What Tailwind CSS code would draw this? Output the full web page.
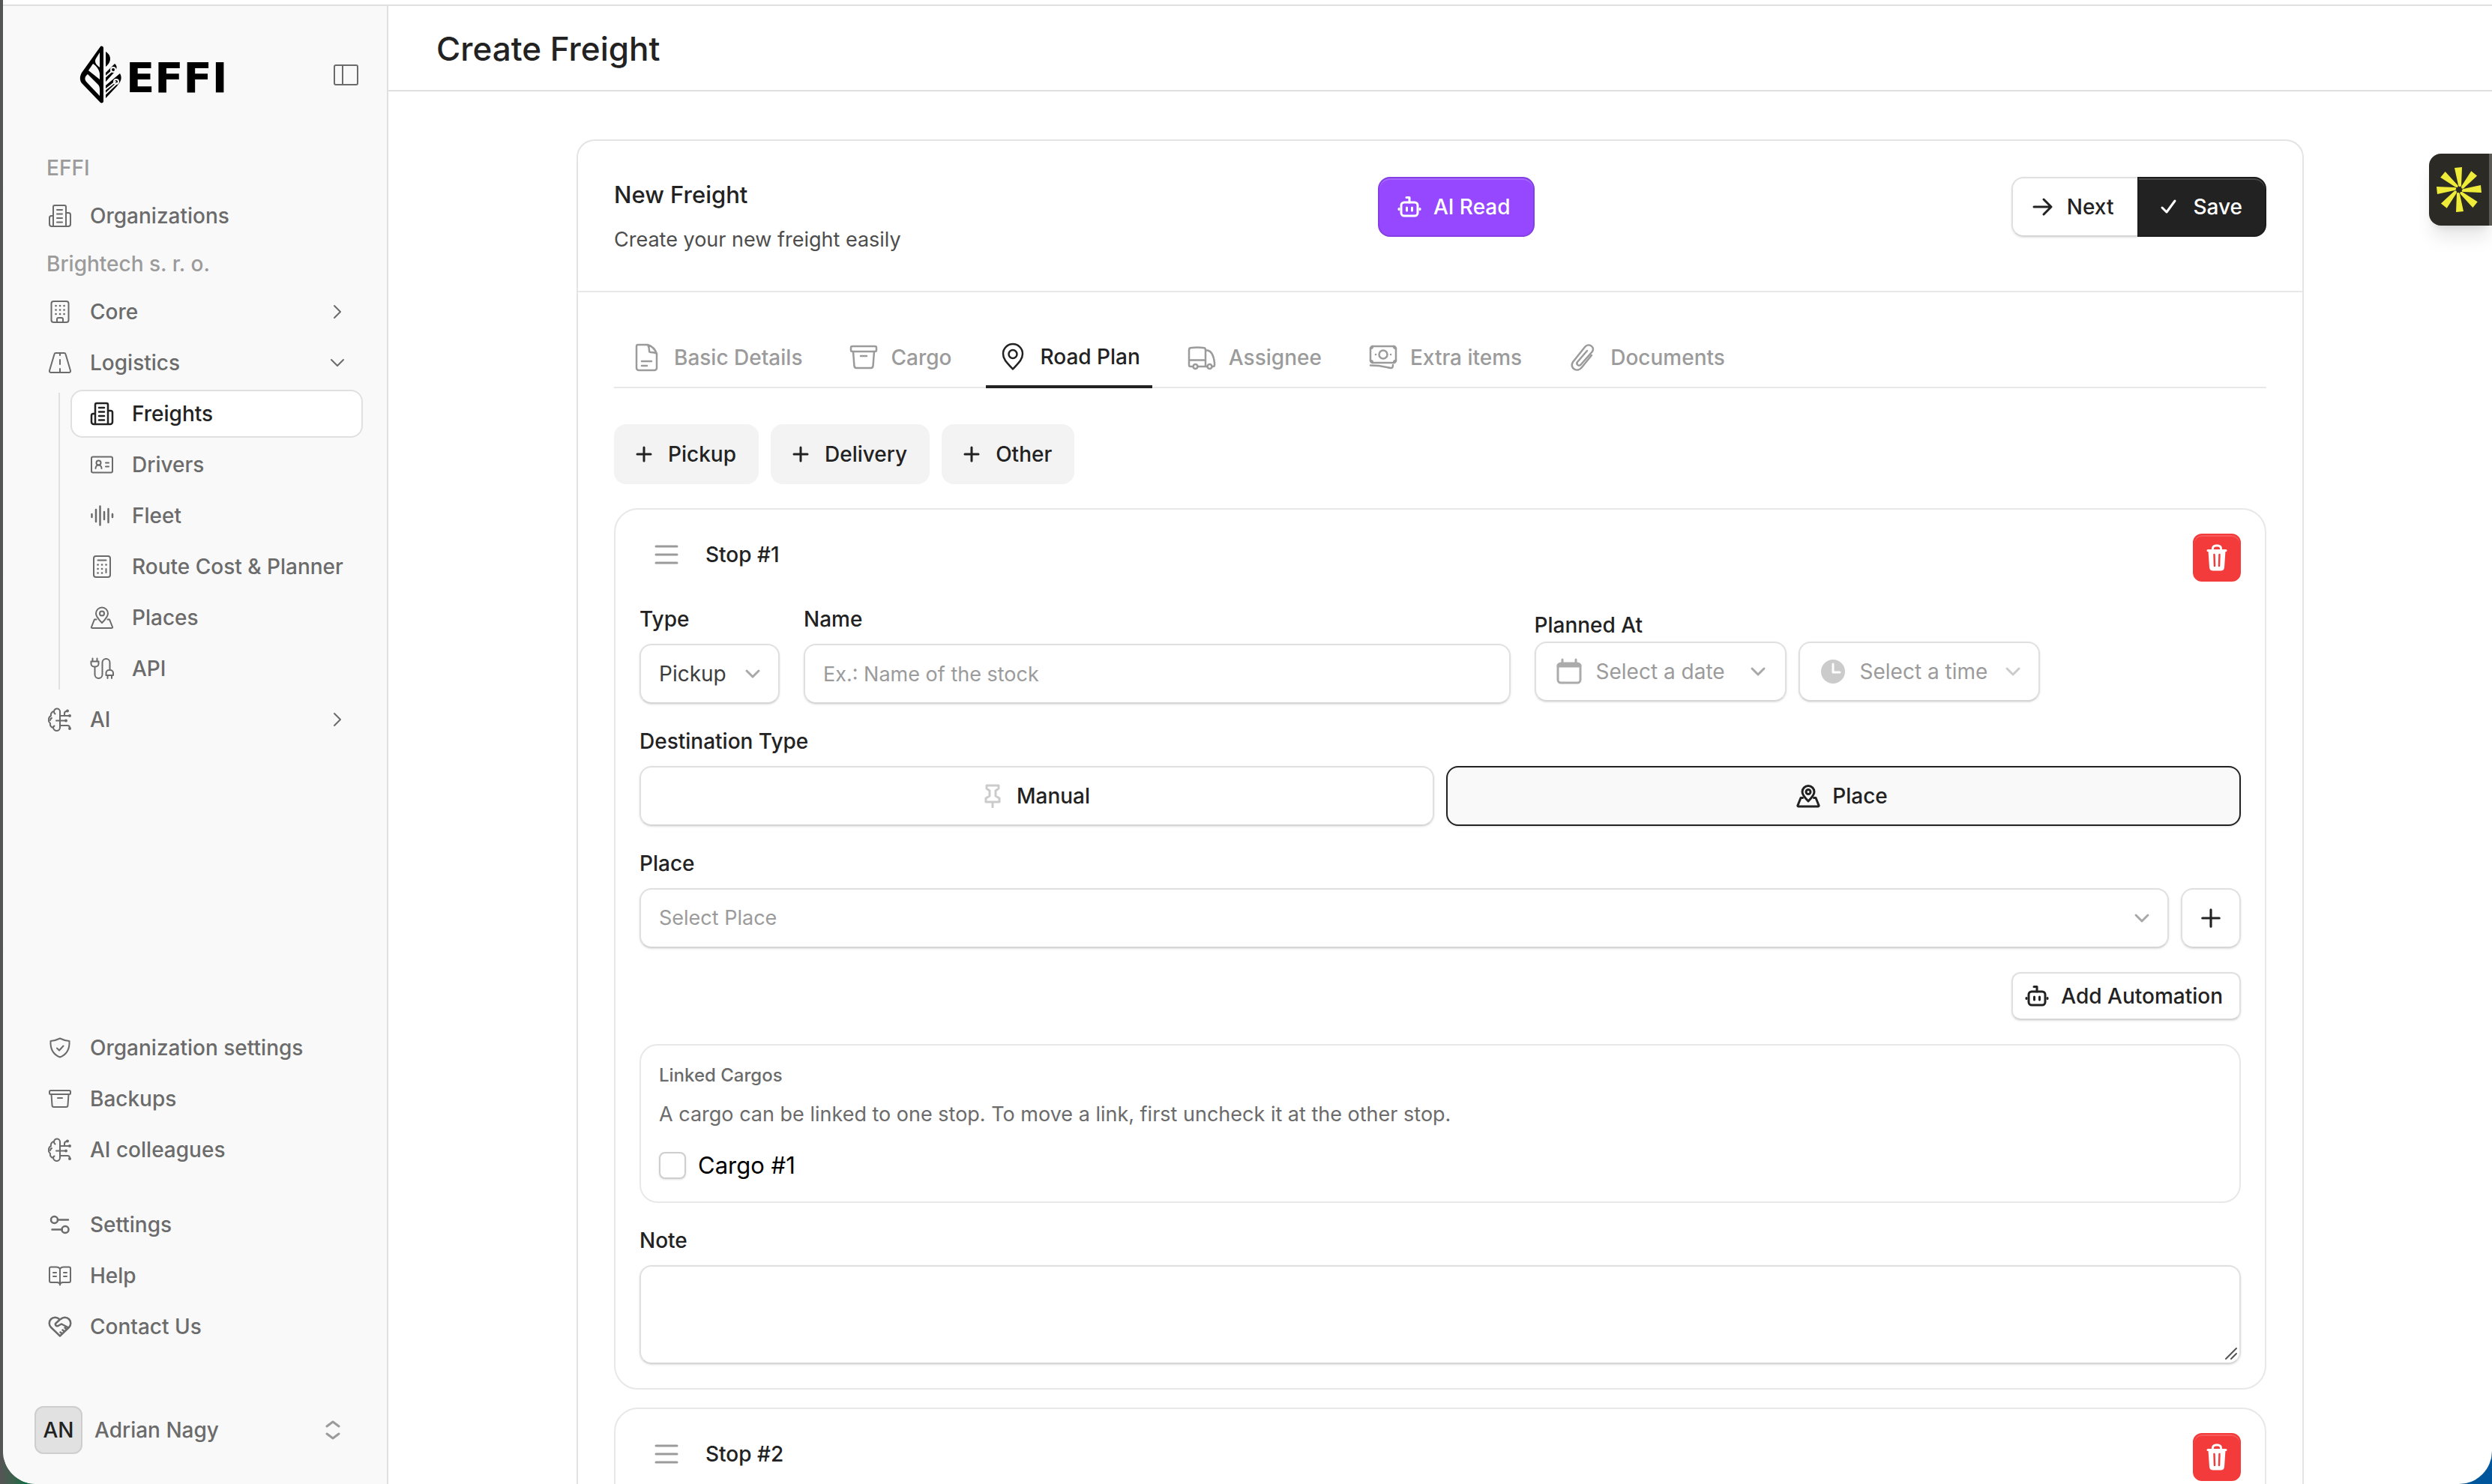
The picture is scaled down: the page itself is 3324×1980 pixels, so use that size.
<!DOCTYPE html>
<html lang="en">
<head>
    <meta charset="UTF-8">
    <meta name="viewport" content="width=device-width, initial-scale=1.0">
    <title>Create Freight - EFFI</title>
    <!-- Tailwind CSS CDN -->
    <script src="https://cdn.jsdelivr.net/npm/@tailwindcss/browser@4"></script>
    <style>
        body {
            font-family: 'Inter', sans-serif;
        }
        svg {
            stroke-linecap: round;
            stroke-linejoin: round;
        }
    </style>
</head>
<body class="bg-[#0b3b4d] text-[28px] leading-9 text-[#222222]">

    <!-- Icon sprite -->
    <svg class="hidden" aria-hidden="true">
        <symbol id="i-news" viewBox="0 0 32 32">
            <path d="M7 30V4a2 2 0 0 1 2-2h13a2 2 0 0 1 2 2v26M7 16H4.500a2.500 2.500 0 0 0-2.500 2.500V27a3 3 0 0 0 3 3h22a3 3 0 0 0 3-3V14.500a2.500 2.500 0 0 0-2.500-2.500H24M12 8h7M12 13.500h7M12 19h7M12 24.500h7"/>
        </symbol>
        <symbol id="i-building" viewBox="0 0 32 32">
            <rect x="4.500" y="2" width="23" height="28" rx="3"/><path d="M12 30v-4a2 2 0 0 1 2-2h4a2 2 0 0 1 2 2v4"/>
            <path stroke-width="2.600" d="M10.500 8h.1M16 8h.1M21.500 8h.1M10.500 13.500h.1M16 13.500h.1M21.500 13.500h.1M10.500 19h.1M16 19h.1M21.500 19h.1"/>
        </symbol>
        <symbol id="i-road" viewBox="0 0 32 32">
            <path d="M10.500 3h11a2 2 0 0 1 2 1.500l6.500 22a2 2 0 0 1-2 2.500H4a2 2 0 0 1-2-2.500l6.500-22a2 2 0 0 1 2-1.500zM16 3v3M16 12v6M16 24v4"/>
        </symbol>
        <symbol id="i-card" viewBox="0 0 32 32">
            <rect x="2" y="5.500" width="28" height="21" rx="2"/><circle cx="11.500" cy="13.500" r="3"/><path d="M7.500 21c0-6 8-6 8 0M21 13.500h4M21 18.500h4"/>
        </symbol>
        <symbol id="i-wave" viewBox="0 0 32 32">
            <path d="M2.500 14v4M8 8v16M13.500 3.500v25M19 11v10M24.500 7v18M30 14v4"/>
        </symbol>
        <symbol id="i-calc" viewBox="0 0 32 32">
            <rect x="5" y="2" width="22" height="28" rx="3"/><path d="M10.500 7.500h11M21.500 19v5"/>
            <path stroke-width="2.600" d="M10.500 13.500h.1M16 13.500h.1M21.500 13.500h.1M10.500 19h.1M16 19h.1M10.500 24.500h.1M16 24.500h.1"/>
        </symbol>
        <symbol id="i-map" viewBox="0 0 32 32">
            <path d="M16 23c-5-5-8-8.500-8-12.500a8 8 0 0 1 16 0c0 4-3 7.500-8 12.500z"/><circle cx="16" cy="10.500" r="3"/><path d="M8.500 18.500H6L2 28.500c-.5 1 .5 1.500 1 1.500h26c.5 0 1.500-.5 1-1.500l-4-10h-2.500"/>
        </symbol>
        <symbol id="i-plug" viewBox="0 0 32 32">
            <path d="M3.500 2.500v4M9.500 2.500v4M1.500 6.500h10v3a4 4 0 0 1-4 4h-2a4 4 0 0 1-4-4zM6.500 13.500V24a5 5 0 0 0 10 0V8a5 5 0 0 1 10 0v10M21.500 25v-3a4 4 0 0 1 4-4h1.500a4 4 0 0 1 4 4v3zM23.500 25v4M29 25v4"/>
        </symbol>
        <symbol id="i-brain" viewBox="0 0 32 32">
            <path d="M16 6a4 4 0 0 0-8-1 5 5 0 0 0-4 6 6 6 0 0 0-1 10 5 5 0 0 0 4 6 4.500 4.500 0 0 0 9-1zM8 5c0 2 .5 3 1.500 3.500M3 17c0-1.500 1-2.500 2-3M7 27c0-1.500.5-2 1.500-2.500M11 17.500h12M16 11h12M22 11V8c0-2 1-3 3-3M16 24h10c2 0 3 1 3 3"/>
            <circle cx="26" cy="4.500" r="1"/><circle cx="29" cy="11" r="1"/><circle cx="24" cy="17.500" r="1"/><circle cx="29" cy="28" r="1"/>
        </symbol>
        <symbol id="i-shield" viewBox="0 0 32 32">
            <path d="M16 3.500c4 2 8 3 12.500 3.500.5 9.500-2 17.500-12.500 21.500C5.500 24.500 3 16.500 3.500 7 8 6.500 12 5.500 16 3.500zM12 16.500l3 3 5.500-6"/>
        </symbol>
        <symbol id="i-archive" viewBox="0 0 32 32">
            <rect x="2" y="5" width="28" height="5" rx="1.500"/><path d="M4.500 10l1 14.500a2.500 2.500 0 0 0 2.500 2.500h16a2.500 2.500 0 0 0 2.500-2.500l1-14.500M13 15h6"/>
        </symbol>
        <symbol id="i-sliders" viewBox="0 0 32 32">
            <circle cx="8.500" cy="9.500" r="4.500"/><path d="M13 9.500H27M5.500 22.500h13"/><circle cx="23" cy="22.500" r="4.500"/>
        </symbol>
        <symbol id="i-book" viewBox="0 0 32 32">
            <path d="M16 7c-1-2-3-2.500-5-2.500H4a2 2 0 0 0-2 2V23a2 2 0 0 0 2 2h8c2 0 4 1 4 3.500 0-2.500 2-3.500 4-3.500h8a2 2 0 0 0 2-2V6.500a2 2 0 0 0-2-2h-7c-2 0-4 .5-5 2.500zM16 7v21M7 12h4M7 17h4M21 12h4M21 17h4"/>
        </symbol>
        <symbol id="i-heart" viewBox="0 0 32 32">
            <path d="M16 28.500L4 17C1 14 1 9 4 6c3-3 8-3 11 0l1 .5 1-.5c3-3 8-3 11 0s3 8 0 11zM16 6.500l-5.500 5c-1.500 1.500 0 4.500 3 3.500l4.500-2.500 9.500 5M22 22.500l-2.500-2M19 25.500l-2.500-2M25 19.500l-2.500-2"/>
        </symbol>
        <symbol id="i-chev" viewBox="0 0 32 32"><path d="M8 12l8 8 8-8"/></symbol>
        <symbol id="i-plus" viewBox="0 0 32 32"><path d="M16 7v18M7 16h18"/></symbol>
        <symbol id="i-robot" viewBox="0 0 32 32">
            <rect x="5" y="10" width="22" height="18" rx="4"/><path d="M12 3.500h4V10M2 18.500v1M30 18.500v1M12.500 17v4M19.500 17v4"/>
        </symbol>
        <symbol id="i-trash" viewBox="0 0 32 36">
            <path d="M10.500 7V6a4 4 0 0 1 4-4h3a4 4 0 0 1 4 4v1M4 8.500h24" stroke-width="3"/>
            <path fill="currentColor" stroke="none" d="M4.500 9h23L26 31a5 5 0 0 1-5 4.500H11A5 5 0 0 1 6 31z"/>
            <path class="stroke-[#f43b3b]" stroke-width="2.500" d="M12.500 14l.5 15M19.500 14l-.5 15"/>
        </symbol>
        <symbol id="i-doc" viewBox="0 0 40 40">
            <path d="M8 3h13c6 2 10 6 12 12v19a3 3 0 0 1-3 3H9a3 3 0 0 1-3-3V5a2 2 0 0 1 2-2zM21 3c2 3 2 6 2 8a2 2 0 0 0 2 2c3 0 6 0 8 2M13 25h13M13 31h7"/>
        </symbol>
        <symbol id="i-box" viewBox="0 0 40 40">
            <rect x="3" y="5" width="34" height="7" rx="2"/><path d="M6 12l1.500 19.500a3 3 0 0 0 3 2.500h19a3 3 0 0 0 3-2.500L34 12M16 18h8"/>
        </symbol>
        <symbol id="i-pin" viewBox="0 0 40 40">
            <path d="M20 36.500C11 27 7 23 7 16a13 13 0 0 1 26 0c0 7-4 11-13 20.500z"/><circle cx="20" cy="16.500" r="5.500"/>
        </symbol>
        <symbol id="i-truck" viewBox="0 0 40 40">
            <path d="M8.500 32H5a2 2 0 0 1-2-2V10c0-2 1-3 3-3 6-.7 11-.7 16 0 2 0 3 1 3 3v22M14.500 32h13M3 23.500h22M25 10.500h3c5 1 8 8 9 16.500v3a2 2 0 0 1-2 2h-1.500"/><circle cx="11.500" cy="32" r="3"/><circle cx="30.500" cy="32" r="3"/>
        </symbol>
        <symbol id="i-cash" viewBox="0 0 40 40">
            <rect x="3" y="5" width="34" height="22" rx="3"/><circle cx="20" cy="16" r="5.500"/><path d="M3 8c2 0 3-1 3-3M37 8c-2 0-3-1-3-3M3 24c2 0 3 1 3 3M37 24c-2 0-3 1-3 3M10 16h.1M30 16h.1M3 30.500c14 0 19 2 27 3.500 2 .3 3-1 3-4"/>
        </symbol>
        <symbol id="i-clip" viewBox="0 0 40 40">
            <path d="M31 17L18 33c-6 8-17 1-12-7L22 6c5-6 14 0 10 6L17 29c-3 4-7 0-5-3l13-15"/>
        </symbol>
        <symbol id="i-tack" viewBox="0 0 32 32">
            <path d="M8 2h16v4l-4 3v7l5 3v5H7v-5l5-3V9L8 6zM16 24v7"/>
        </symbol>
    </svg>

    <!-- Desktop strip behind the window -->
    <div class="h-screen overflow-hidden bg-gradient-to-r from-[#555555] via-[#0f6b45] via-1% to-[#00569c] pl-1">
        <div class="relative flex h-full flex-col overflow-hidden rounded-b-[44px] bg-white">
            <div class="h-2 shrink-0 border-b-2 border-[#e0e0e0]"></div>

            <div class="flex min-h-0 flex-1">

                <!-- Sidebar -->
                <aside class="flex w-[514px] shrink-0 flex-col border-r-2 border-[#e0e0e0] bg-[#f9f9f9] font-medium text-[#6b6b6b]">
                    <div class="flex h-[184px] shrink-0 items-center justify-between pr-9 pl-[100px]">
                        <a href="#" class="flex items-center gap-1 text-black" aria-label="EFFI home">
                            <svg class="h-20 w-[60px]" viewBox="0 0 60 80">
                                <path d="M30 2c2-1 4 0 4 2v71c0 2-2 3-4 2L6 52c-4-4-4-10-1-15z"/>
                                <path class="fill-[#f9f9f9]" d="M29 10v20c-4-3-8-7-5-12zM20 25c5 3 9 9 9 14v7L14 34zM13 39l14 14c2 2 2 5 2 8v7L12 50c-4-4-3-8 1-11z" />
                                <path d="M37 9c7 4 9 13 0 20zM37 37L49 25c5 4 2 9-2 13L37 49zM37 54l19-16c4 7 0 12-4 17L37 71z"/>
                                <path class="stroke-[#f9f9f9]" stroke-width="2" d="M36 43l9-8M36 60l14-11M36 66l16-15"/>
                                <circle cx="47" cy="33" r="3" fill="none" class="stroke-[#f9f9f9]" stroke-width="2"/>
                                <circle cx="51" cy="49" r="3" fill="none" class="stroke-[#f9f9f9]" stroke-width="2"/>
                            </svg>
                            <span class="pt-2 font-['DejaVu_Sans'] text-[56px] leading-none font-bold">EFFI</span>
                        </a>
                        <button type="button" aria-label="Toggle sidebar">
                            <svg class="size-9 fill-none stroke-current stroke-2" viewBox="0 0 36 36"><rect x="2" y="5" width="31" height="26" rx="2"/><path d="M13 5v26"/></svg>
                        </button>
                    </div>

                    <nav class="px-[42px] pr-8" aria-label="Main">
                        <h2 class="flex h-16 items-center pl-4 text-[#9b9b9b]">EFFI</h2>
                        <a href="#" class="flex h-16 items-center gap-6 pl-[18px]">
                            <svg class="size-8 fill-none stroke-current stroke-2"><use href="#i-news"/></svg>Organizations
                        </a>
                        <h2 class="flex h-16 items-center pl-4 text-[#9b9b9b]">Brightech s. r. o.</h2>
                        <div class="flex flex-col gap-1">
                            <a href="#" class="flex h-16 items-center gap-6 px-[18px]">
                                <svg class="size-8 fill-none stroke-current stroke-2"><use href="#i-building"/></svg>
                                <span class="flex-1">Core</span>
                                <svg class="size-8 -rotate-90 fill-none stroke-current stroke-2"><use href="#i-chev"/></svg>
                            </a>
                            <a href="#" class="flex h-16 items-center gap-6 px-[18px]">
                                <svg class="size-8 fill-none stroke-current stroke-2"><use href="#i-road"/></svg>
                                <span class="flex-1">Logistics</span>
                                <svg class="size-8 fill-none stroke-current stroke-2"><use href="#i-chev"/></svg>
                            </a>
                            <div class="flex">
                                <div class="my-1 ml-8 w-[2px] bg-[#e0e0e0]"></div>
                                <div class="ml-3.5 flex flex-1 flex-col gap-1">
                                    <a href="#" class="flex h-16 items-center gap-6 rounded-2xl border-2 border-[#e0e0e0] bg-white pl-6 text-[#222222]">
                                        <svg class="size-8 fill-none stroke-current stroke-[2.5px]"><use href="#i-news"/></svg>Freights
                                    </a>
                                    <a href="#" class="flex h-16 items-center gap-6 pl-[26px]">
                                        <svg class="size-8 fill-none stroke-current stroke-2"><use href="#i-card"/></svg>Drivers
                                    </a>
                                    <a href="#" class="flex h-16 items-center gap-6 pl-[26px]">
                                        <svg class="size-8 fill-none stroke-current stroke-[2.5px]"><use href="#i-wave"/></svg>Fleet
                                    </a>
                                    <a href="#" class="flex h-16 items-center gap-6 pl-[26px]">
                                        <svg class="size-8 fill-none stroke-current stroke-2"><use href="#i-calc"/></svg>Route Cost &amp; Planner
                                    </a>
                                    <a href="#" class="flex h-16 items-center gap-6 pl-[26px]">
                                        <svg class="size-8 fill-none stroke-current stroke-2"><use href="#i-map"/></svg>Places
                                    </a>
                                    <a href="#" class="flex h-16 items-center gap-6 pl-[26px]">
                                        <svg class="size-8 fill-none stroke-current stroke-2"><use href="#i-plug"/></svg>API
                                    </a>
                                </div>
                            </div>
                            <a href="#" class="flex h-16 items-center gap-6 px-[18px]">
                                <svg class="size-8 fill-none stroke-current stroke-2"><use href="#i-brain"/></svg>
                                <span class="flex-1">AI</span>
                                <svg class="size-8 -rotate-90 fill-none stroke-current stroke-2"><use href="#i-chev"/></svg>
                            </a>
                        </div>
                    </nav>

                    <nav class="mt-auto flex flex-col gap-1 px-[42px]" aria-label="Organization">
                        <a href="#" class="flex h-16 items-center gap-6 pl-[18px]">
                            <svg class="size-8 fill-none stroke-current stroke-2"><use href="#i-shield"/></svg>Organization settings
                        </a>
                        <a href="#" class="flex h-16 items-center gap-6 pl-[18px]">
                            <svg class="size-8 fill-none stroke-current stroke-2"><use href="#i-archive"/></svg>Backups
                        </a>
                        <a href="#" class="flex h-16 items-center gap-6 pl-[18px]">
                            <svg class="size-8 fill-none stroke-current stroke-2"><use href="#i-brain"/></svg>AI colleagues
                        </a>
                        <a href="#" class="mt-8 flex h-16 items-center gap-6 pl-[18px]">
                            <svg class="size-8 fill-none stroke-current stroke-[2.5px]"><use href="#i-sliders"/></svg>Settings
                        </a>
                        <a href="#" class="flex h-16 items-center gap-6 pl-[18px]">
                            <svg class="size-8 fill-none stroke-current stroke-2"><use href="#i-book"/></svg>Help
                        </a>
                        <a href="#" class="flex h-16 items-center gap-6 pl-[18px]">
                            <svg class="size-8 fill-none stroke-current stroke-[2.5px]"><use href="#i-heart"/></svg>Contact Us
                        </a>
                    </nav>

                    <!-- User -->
                    <button type="button" class="mt-[74px] mb-10 flex items-center gap-4 pr-14 pl-[42px] text-left">
                        <span class="flex size-16 items-center justify-center rounded-xl border-2 border-[#cecece] bg-[#e1e1e1] text-[#222222]">AN</span>
                        <span class="flex-1">Adrian Nagy</span>
                        <svg class="size-8 fill-none stroke-[#9b9b9b] stroke-3" viewBox="0 0 32 32"><path d="M8 11l8-6 8 6M8 21l8 6 8-6"/></svg>
                    </button>
                </aside>

                <!-- Main -->
                <main class="flex min-w-0 flex-1 flex-col">
                    <header class="flex h-[114px] shrink-0 items-center border-b-2 border-[#e0e0e0] px-16">
                        <h1 class="pt-0.5 text-[44px] leading-[52px] font-medium">Create Freight</h1>
                    </header>

                    <div class="min-h-0 flex-1 overflow-hidden px-16 pt-16">
                        <form class="mx-auto max-w-[2304px] rounded-t-3xl border-2 border-b-0 border-[#e4e4e4]">
                            <div class="flex items-start justify-between border-b-2 border-[#e8e8e8] p-12">
                                <div class="flex flex-col gap-4">
                                    <h2 class="text-[31px] leading-[48px] font-medium">New Freight</h2>
                                    <p class="text-[27px] leading-10 text-[#4d4d4d]">Create your new freight easily</p>
                                </div>
                                <button type="button" class="flex h-20 items-center gap-4 rounded-2xl border-2 border-[#833fe4] bg-[#9548ff] pr-[30px] pl-6 font-medium text-white shadow-[inset_0_2px_0_#a567ff]">
                                    <svg class="size-8 fill-none stroke-current stroke-3"><use href="#i-robot"/></svg>AI Read
                                </button>
                                <div class="flex font-medium">
                                    <button type="button" class="flex h-20 items-center gap-4 rounded-l-2xl border-2 border-r-0 border-[#e0e0e0] border-b-[#d6d6d6] pr-8 pl-6 shadow-sm">
                                        <svg class="size-8 fill-none stroke-current stroke-3" viewBox="0 0 32 32"><path d="M4 16h23M17 6l10 10-10 10"/></svg>Next
                                    </button>
                                    <button type="button" class="flex h-20 items-center gap-4 rounded-r-2xl border-2 border-[#1c1c1c] bg-[#222222] pr-[30px] pl-6 text-white shadow-[inset_0_2px_0_#484848]">
                                        <svg class="size-8 fill-none stroke-current stroke-3" viewBox="0 0 32 32"><path d="M7 17l6 6L24 8"/></svg>Save
                                    </button>
                                </div>
                            </div>

                            <div class="p-12">
                                <!-- Tabs -->
                                <div role="tablist" class="flex h-20 gap-[30px] border-b-2 border-[#e8e8e8] px-2 font-medium text-[#9b9b9b]">
                                    <button type="button" role="tab" class="flex items-center gap-4 px-4">
                                        <svg class="size-10 fill-none stroke-current stroke-[2.5px]"><use href="#i-doc"/></svg>Basic Details
                                    </button>
                                    <button type="button" role="tab" class="flex items-center gap-4 px-4">
                                        <svg class="size-10 fill-none stroke-current stroke-[2.5px]"><use href="#i-box"/></svg>Cargo
                                    </button>
                                    <button type="button" role="tab" aria-selected="true" class="-mb-0.5 flex items-center gap-4 border-b-4 border-[#222222] px-4 text-[#222222]">
                                        <svg class="size-10 fill-none stroke-current stroke-[2.5px]"><use href="#i-pin"/></svg>Road Plan
                                    </button>
                                    <button type="button" role="tab" class="flex items-center gap-4 px-4">
                                        <svg class="size-10 fill-none stroke-current stroke-[2.5px]"><use href="#i-truck"/></svg>Assignee
                                    </button>
                                    <button type="button" role="tab" class="flex items-center gap-4 px-4">
                                        <svg class="size-10 fill-none stroke-current stroke-[2.5px]"><use href="#i-cash"/></svg>Extra items
                                    </button>
                                    <button type="button" role="tab" class="flex items-center gap-4 px-4">
                                        <svg class="size-10 fill-none stroke-current stroke-[2.5px]"><use href="#i-clip"/></svg>Documents
                                    </button>
                                </div>

                                <!-- Add stop buttons -->
                                <div class="mt-12 flex gap-4 font-medium">
                                    <button type="button" class="flex h-20 items-center gap-4 rounded-2xl bg-[#f3f3f3] pr-[30px] pl-6">
                                        <svg class="size-8 fill-none stroke-current stroke-3"><use href="#i-plus"/></svg>Pickup
                                    </button>
                                    <button type="button" class="flex h-20 items-center gap-4 rounded-2xl bg-[#f3f3f3] pr-[30px] pl-6">
                                        <svg class="size-8 fill-none stroke-current stroke-3"><use href="#i-plus"/></svg>Delivery
                                    </button>
                                    <button type="button" class="flex h-20 items-center gap-4 rounded-2xl bg-[#f3f3f3] pr-[30px] pl-6">
                                        <svg class="size-8 fill-none stroke-current stroke-3"><use href="#i-plus"/></svg>Other
                                    </button>
                                </div>

                                <!-- Stop #1 -->
                                <section class="mt-8 flex flex-col gap-8 rounded-[32px] border-2 border-[#e8e8e8] p-8">
                                    <div class="flex items-start justify-between">
                                        <div class="flex h-14 items-center gap-9 pl-5 font-medium">
                                            <svg class="h-7 w-8 fill-none stroke-[#9b9b9b] stroke-3" viewBox="0 0 32 28"><path d="M2 3h28M2 14h28M2 25h28"/></svg>
                                            <h3>Stop #1</h3>
                                        </div>
                                        <button type="button" aria-label="Delete stop 1" class="flex size-16 items-center justify-center rounded-xl border-2 border-[#f43b3b] bg-[#f43b3b] text-white shadow-[inset_0_2px_0_#f65a5a]">
                                            <svg class="h-9 w-8 fill-none stroke-current"><use href="#i-trash"/></svg>
                                        </button>
                                    </div>

                                    <div class="flex gap-8">
                                        <div class="flex flex-col gap-[15px]">
                                            <label for="type" class="font-medium">Type</label>
                                            <div class="relative">
                                                <select id="type" class="h-20 w-[187px] appearance-none rounded-2xl border-2 border-[#e0e0e0] border-b-[#d6d6d6] bg-white pl-6 text-[#3d3d3d] shadow-sm">
                                                    <option>Pickup</option>
                                                    <option>Delivery</option>
                                                    <option>Other</option>
                                                </select>
                                                <svg class="pointer-events-none absolute top-6 right-5 size-8 fill-none stroke-[#a8a8a8] stroke-3"><use href="#i-chev"/></svg>
                                            </div>
                                        </div>
                                        <div class="flex min-w-0 flex-1 flex-col gap-[15px]">
                                            <label for="name" class="font-medium">Name</label>
                                            <input id="name" type="text" placeholder="Ex.: Name of the stock" class="h-20 w-full rounded-2xl border-2 border-[#e0e0e0] border-b-[#d6d6d6] px-6 text-[27px] shadow-sm placeholder:text-[#9b9b9b]">
                                        </div>
                                        <div class="flex min-w-0 flex-1 flex-col gap-1 pt-2">
                                            <label for="date" class="font-medium">Planned At</label>
                                            <div class="flex gap-4">
                                                <button id="date" type="button" class="flex h-20 w-[336px] items-center gap-4 rounded-2xl border-2 border-[#e0e0e0] border-b-[#d6d6d6] px-5 pl-6 text-left text-[#9b9b9b] shadow-sm">
                                                    <svg class="size-10 fill-none stroke-[#ababab] stroke-[3px]" viewBox="0 0 40 40"><rect x="5" y="9" width="30" height="26" rx="4"/><path d="M6 12h28" stroke-width="5"/><path d="M11 4v6M29 4v6"/></svg>
                                                    <span class="flex-1">Select a date</span>
                                                    <svg class="size-8 fill-none stroke-[#a8a8a8] stroke-3"><use href="#i-chev"/></svg>
                                                </button>
                                                <div class="relative">
                                                    <select aria-label="Select a time" class="h-20 w-[322px] appearance-none rounded-2xl border-2 border-[#e0e0e0] border-b-[#d6d6d6] bg-white pl-20 text-[#9b9b9b] shadow-sm">
                                                        <option>Select a time</option>
                                                    </select>
                                                    <svg class="pointer-events-none absolute top-5 left-[26px] size-10" viewBox="0 0 40 40"><circle cx="20" cy="20" r="16" class="fill-[#cbcbcb]"/><path d="M20 10v11h9" class="fill-none stroke-white stroke-3"/></svg>
                                                    <svg class="pointer-events-none absolute top-6 right-5 size-8 fill-none stroke-[#cbcbcb] stroke-3"><use href="#i-chev"/></svg>
                                                </div>
                                            </div>
                                        </div>
                                    </div>

                                    <div class="flex flex-col gap-[15px]" role="group" aria-labelledby="dest-label">
                                        <span id="dest-label" class="font-medium">Destination Type</span>
                                        <div class="grid grid-cols-2 gap-4 font-medium">
                                            <button type="button" class="flex h-20 items-center justify-center gap-4 rounded-2xl border-2 border-[#e0e0e0] border-b-[#d6d6d6] pr-1 shadow-sm">
                                                <svg class="size-8 fill-none stroke-[#cbcbcb] stroke-3"><use href="#i-tack"/></svg>Manual
                                            </button>
                                            <button type="button" aria-pressed="true" class="flex h-20 items-center justify-center gap-4 rounded-2xl border-2 border-[#222222] bg-[#f9f9f9] pr-1 shadow-sm">
                                                <svg class="size-8 fill-none stroke-current stroke-3"><use href="#i-map"/></svg>Place
                                            </button>
                                        </div>
                                    </div>

                                    <div class="flex flex-col gap-[15px]">
                                        <label for="place" class="font-medium">Place</label>
                                        <div class="flex gap-4">
                                            <div class="relative flex-1">
                                                <select id="place" class="h-20 w-full appearance-none rounded-2xl border-2 border-[#e0e0e0] border-b-[#d6d6d6] bg-white px-6 text-[27px] text-[#9b9b9b] shadow-sm">
                                                    <option>Select Place</option>
                                                </select>
                                                <svg class="pointer-events-none absolute top-6 right-5 size-8 fill-none stroke-[#a8a8a8] stroke-3"><use href="#i-chev"/></svg>
                                            </div>
                                            <button type="button" aria-label="Add place" class="flex size-20 items-center justify-center rounded-2xl border-2 border-[#e0e0e0] border-b-[#d6d6d6] shadow-sm">
                                                <svg class="size-10 fill-none stroke-current stroke-[2.5px]"><use href="#i-plus"/></svg>
                                            </button>
                                        </div>
                                    </div>

                                    <button type="button" class="flex h-16 items-center gap-4 self-end rounded-xl border-2 border-[#e0e0e0] border-b-[#d6d6d6] pr-[22px] pl-4 font-medium shadow-sm">
                                        <svg class="size-8 fill-none stroke-current stroke-3"><use href="#i-robot"/></svg>Add Automation
                                    </button>

                                    <div class="rounded-3xl border-2 border-[#e8e8e8] p-6 text-[#6b6b6b]">
                                        <h4 class="text-2xl leading-8 font-medium">Linked Cargos</h4>
                                        <p class="mt-4 text-[27px] leading-10">A cargo can be linked to one stop. To move a link, first uncheck it at the other stop.</p>
                                        <label class="mt-6 flex h-12 items-center gap-4 text-[31px] text-black">
                                            <input type="checkbox" class="size-9 appearance-none rounded-lg border-2 border-[#cecece] shadow-sm">
                                            Cargo #1
                                        </label>
                                    </div>

                                    <div class="flex flex-col gap-[15px]">
                                        <label for="note" class="font-medium">Note</label>
                                        <div class="relative flex">
                                            <textarea id="note" class="h-[132px] w-full resize-none rounded-2xl border-2 border-[#e0e0e0] border-b-[#d6d6d6] px-6 py-4 shadow-sm"></textarea>
                                            <svg class="pointer-events-none absolute right-1 bottom-1 size-5 fill-none stroke-[#555555] stroke-2" viewBox="0 0 20 20"><path d="M4 17L18 3M11 17l7-7"/></svg>
                                        </div>
                                    </div>
                                </section>

                                <!-- Stop #2 -->
                                <section class="mt-6 flex flex-col gap-8 rounded-[32px] border-2 border-[#e8e8e8] p-8">
                                    <div class="flex items-start justify-between">
                                        <div class="flex h-14 items-center gap-9 pl-5 font-medium">
                                            <svg class="h-7 w-8 fill-none stroke-[#9b9b9b] stroke-3" viewBox="0 0 32 28"><path d="M2 3h28M2 14h28M2 25h28"/></svg>
                                            <h3>Stop #2</h3>
                                        </div>
                                        <button type="button" aria-label="Delete stop 2" class="flex size-16 items-center justify-center rounded-xl border-2 border-[#f43b3b] bg-[#f43b3b] text-white shadow-[inset_0_2px_0_#f65a5a]">
                                            <svg class="h-9 w-8 fill-none stroke-current"><use href="#i-trash"/></svg>
                                        </button>
                                    </div>
                                    <div class="h-40"></div>
                                </section>
                            </div>
                        </form>
                    </div>
                </main>
            </div>

            <!-- Floating widget -->
            <button type="button" aria-label="Open assistant" class="absolute top-[205px] right-0 flex h-24 w-[84px] items-center rounded-l-2xl border-r-4 border-[#5a5955] bg-[#2b2a25] pl-2 shadow-xl">
                <svg class="size-16 fill-[#eeec38]" viewBox="-32 -32 64 64">
                    <path id="ray" d="M-6-29l10-1-1 24c0 3-3 3-4 0z"/>
                    <use href="#ray" transform="rotate(45)"/>
                    <use href="#ray" transform="rotate(90)"/>
                    <use href="#ray" transform="rotate(135)"/>
                    <use href="#ray" transform="rotate(180)"/>
                    <use href="#ray" transform="rotate(225)"/>
                    <use href="#ray" transform="rotate(270)"/>
                    <use href="#ray" transform="rotate(315)"/>
                </svg>
            </button>
        </div>
    </div>
</body>
</html>
